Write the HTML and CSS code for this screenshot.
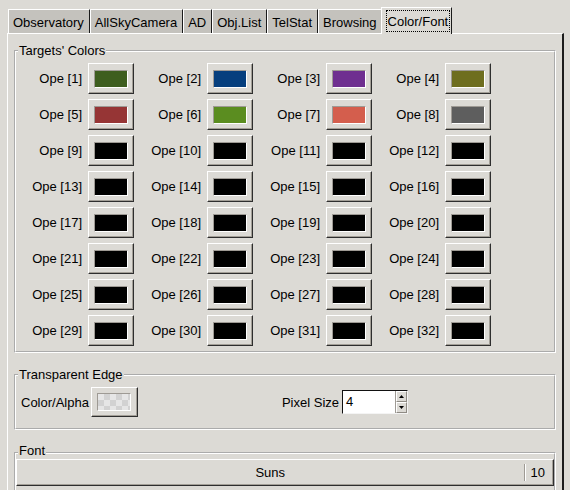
FILE: index.html
```html
<!DOCTYPE html>
<html>
<head>
<meta charset="utf-8">
<title>Color/Font</title>
<link rel="stylesheet" href="styles.css">
</head>
<body>
<div class="tabs">
  <div class="tab">Observatory</div>
  <div class="tab">AllSkyCamera</div>
  <div class="tab">AD</div>
  <div class="tab">Obj.List</div>
  <div class="tab">TelStat</div>
  <div class="tab">Browsing</div>
  <div class="tab tab-active"><span class="focus">Color/Font</span></div>
</div>
<div class="notebook">
  <fieldset class="group group-targets">
    <legend>Targets' Colors</legend>
    <div class="color-grid">
      <span class="ope-label">Ope [1]</span><button class="swatch-btn"><span class="swatch c1"></span></button>
      <span class="ope-label">Ope [2]</span><button class="swatch-btn"><span class="swatch c2"></span></button>
      <span class="ope-label">Ope [3]</span><button class="swatch-btn"><span class="swatch c3"></span></button>
      <span class="ope-label">Ope [4]</span><button class="swatch-btn"><span class="swatch c4"></span></button>
      <span class="ope-label">Ope [5]</span><button class="swatch-btn"><span class="swatch c5"></span></button>
      <span class="ope-label">Ope [6]</span><button class="swatch-btn"><span class="swatch c6"></span></button>
      <span class="ope-label">Ope [7]</span><button class="swatch-btn"><span class="swatch c7"></span></button>
      <span class="ope-label">Ope [8]</span><button class="swatch-btn"><span class="swatch c8"></span></button>
      <span class="ope-label">Ope [9]</span><button class="swatch-btn"><span class="swatch"></span></button>
      <span class="ope-label">Ope [10]</span><button class="swatch-btn"><span class="swatch"></span></button>
      <span class="ope-label">Ope [11]</span><button class="swatch-btn"><span class="swatch"></span></button>
      <span class="ope-label">Ope [12]</span><button class="swatch-btn"><span class="swatch"></span></button>
      <span class="ope-label">Ope [13]</span><button class="swatch-btn"><span class="swatch"></span></button>
      <span class="ope-label">Ope [14]</span><button class="swatch-btn"><span class="swatch"></span></button>
      <span class="ope-label">Ope [15]</span><button class="swatch-btn"><span class="swatch"></span></button>
      <span class="ope-label">Ope [16]</span><button class="swatch-btn"><span class="swatch"></span></button>
      <span class="ope-label">Ope [17]</span><button class="swatch-btn"><span class="swatch"></span></button>
      <span class="ope-label">Ope [18]</span><button class="swatch-btn"><span class="swatch"></span></button>
      <span class="ope-label">Ope [19]</span><button class="swatch-btn"><span class="swatch"></span></button>
      <span class="ope-label">Ope [20]</span><button class="swatch-btn"><span class="swatch"></span></button>
      <span class="ope-label">Ope [21]</span><button class="swatch-btn"><span class="swatch"></span></button>
      <span class="ope-label">Ope [22]</span><button class="swatch-btn"><span class="swatch"></span></button>
      <span class="ope-label">Ope [23]</span><button class="swatch-btn"><span class="swatch"></span></button>
      <span class="ope-label">Ope [24]</span><button class="swatch-btn"><span class="swatch"></span></button>
      <span class="ope-label">Ope [25]</span><button class="swatch-btn"><span class="swatch"></span></button>
      <span class="ope-label">Ope [26]</span><button class="swatch-btn"><span class="swatch"></span></button>
      <span class="ope-label">Ope [27]</span><button class="swatch-btn"><span class="swatch"></span></button>
      <span class="ope-label">Ope [28]</span><button class="swatch-btn"><span class="swatch"></span></button>
      <span class="ope-label">Ope [29]</span><button class="swatch-btn"><span class="swatch"></span></button>
      <span class="ope-label">Ope [30]</span><button class="swatch-btn"><span class="swatch"></span></button>
      <span class="ope-label">Ope [31]</span><button class="swatch-btn"><span class="swatch"></span></button>
      <span class="ope-label">Ope [32]</span><button class="swatch-btn"><span class="swatch"></span></button>
    </div>
  </fieldset>

  <fieldset class="group group-edge">
    <legend>Transparent Edge</legend>
    <div class="edge-row">
      <span class="edge-label">Color/Alpha</span>
      <button class="swatch-btn alpha-btn"><span class="swatch checker"></span></button>
      <span class="pixel-label">Pixel Size</span>
      <div class="spinbox">
        <span class="spin-value">4</span>
        <div class="spin-arrows">
          <span class="spin-btn"><svg width="5" height="3" viewBox="0 0 5 3"><path d="M2.5 0 L5 3 L0 3 Z" fill="#000"/></svg></span>
          <span class="spin-btn"><svg width="5" height="3" viewBox="0 0 5 3"><path d="M0 0 L5 0 L2.5 3 Z" fill="#000"/></svg></span>
        </div>
      </div>
    </div>
  </fieldset>

  <fieldset class="group group-font">
    <legend class="font-legend">Font</legend>
    <button class="font-btn"><span class="font-name">Suns</span><span class="font-sep"></span><span class="font-size">10</span></button>
  </fieldset>
</div>
</body>
</html>
```

FILE: styles.css
```css
* {
  box-sizing: border-box;
}

html,
body {
  margin: 0;
  padding: 0;
}

body {
  width: 570px;
  height: 490px;
  overflow: hidden;
  background: #dcdad5;
  color: #000;
  font-family: "Liberation Sans", Arial, sans-serif;
  font-size: 13px;
}

/* ---------- tabs ---------- */
.tabs {
  display: flex;
  align-items: flex-end;
  height: 26px;
  margin: 7px 0 0 8px;
}

.tab {
  height: 24px;
  padding: 3px 5px 0 4px;
  line-height: 20px;
  white-space: nowrap;
  background: #c4c2bd;
  border-top: 1px solid #fff;
  border-left: 1px solid #fff;
  border-right: 1px solid #1a1a1a;
}

.tab-active {
  position: relative;
  z-index: 1;
  height: 27px;
  margin-left: -2px;
  margin-bottom: -1px;
  padding: 2px 1px 0 4px;
  background: #dcdad5;
}

.focus {
  display: block;
  height: 22px;
  padding: 2px 1px 0;
  line-height: 18px;
  border: 1px dotted #000;
}

/* ---------- notebook page ---------- */
.notebook {
  width: 557px;
  height: 457px;
  margin-left: 7px;
  padding: 9px 6px 0 6px;
  border-top: 1px solid #fff;
  border-left: 1px solid #fff;
  border-right: 2px solid #1c1c1c;
}

.group {
  min-width: 0;
  margin: 0;
  border: 2px groove #fff;
}

.group legend {
  margin-left: 2px;
  padding: 0 1px;
  line-height: 16px;
}

.group-targets {
  padding: 4px 0 5px 0;
}

.group-edge {
  margin-top: 14px;
  padding: 4px 0 11px 0;
}

.group-font {
  margin-top: 15px;
  padding: 0 0 4px 0;
}

.group .font-legend {
  line-height: 12px;
  padding-bottom: 4px;
}

/* ---------- colour grid ---------- */
.color-grid {
  display: grid;
  grid-template-columns: 72px 46px repeat(3, 73px 46px);
  grid-auto-rows: 31px;
  row-gap: 5px;
  align-items: center;
}

.ope-label {
  padding-right: 6px;
  text-align: right;
  white-space: nowrap;
}

.swatch-btn {
  display: flex;
  align-items: center;
  justify-content: center;
  width: 46px;
  height: 31px;
  margin: 0;
  padding: 0;
  background: #dcdad5;
  border: 1px solid;
  border-color: #fff #2e2e2e #2e2e2e #fff;
  box-shadow: inset -1px -1px 0 #a39f97;
  font: inherit;
}

.swatch {
  display: block;
  width: 34px;
  height: 18px;
  background: #000;
  border: 1px solid;
  border-color: #9e9a94 #fff #fff #9e9a94;
}

.c1 { background: #3e5e1f; }
.c2 { background: #063f7e; }
.c3 { background: #6f2f90; }
.c4 { background: #6e6e1f; }
.c5 { background: #963535; }
.c6 { background: #5b8d20; }
.c7 { background: #d45e4d; }
.c8 { background: #5e5e5e; }

/* ---------- transparent edge ---------- */
.edge-row {
  display: flex;
  align-items: center;
  padding-left: 5px;
}

.edge-label {
  margin-right: 2px;
}

.alpha-btn {
  width: 47px;
  height: 30px;
}

.checker {
  background-color: #e6e6e6;
  background-image: conic-gradient(#d2d2d2 25%, transparent 0 50%, #d2d2d2 0 75%, transparent 0);
  background-size: 12px 12px;
}

.pixel-label {
  margin-left: 144px;
  margin-right: 3px;
}

.spinbox {
  display: flex;
  width: 66px;
  height: 24px;
  background: #fff;
  border: 1px solid;
  border-color: #111 #f4f4f4 #f4f4f4 #111;
}

.spin-value {
  flex: 1;
  padding-left: 3px;
  line-height: 22px;
}

.spin-arrows {
  display: flex;
  flex-direction: column;
  width: 12px;
  border-left: 1px solid #9e9a94;
}

.spin-btn {
  display: flex;
  flex: 1;
  align-items: center;
  justify-content: center;
  background: #dcdad5;
  border: 1px solid;
  border-color: #fff #8f8b84 #8f8b84 #fff;
}

/* ---------- font button ---------- */
.font-btn {
  display: flex;
  align-items: center;
  width: 100%;
  height: 27px;
  margin: -2px 0 0 0;
  padding: 0;
  background: #dcdad5;
  border: 1px solid;
  border-color: #fff #2e2e2e #2e2e2e #fff;
  box-shadow: inset -1px -1px 0 #a39f97;
  font: inherit;
  color: #000;
}

.font-name {
  flex: 1;
  text-align: center;
}

.font-sep {
  width: 2px;
  height: 17px;
  border-left: 1px solid #9e9a94;
  border-right: 1px solid #fff;
}

.font-size {
  padding: 0 8px 0 5px;
}
```
